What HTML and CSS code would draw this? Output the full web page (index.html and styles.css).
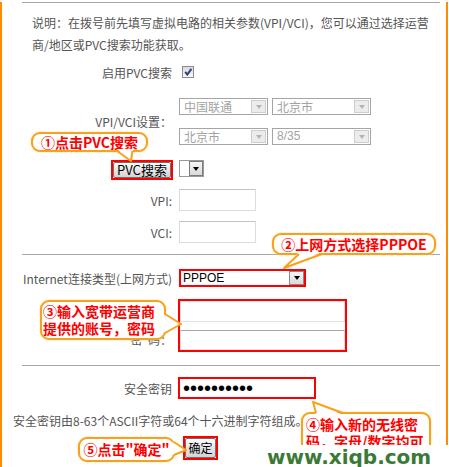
FILE: index.html
```html
<!DOCTYPE html>
<html lang="zh-CN">
<head>
    <meta charset="UTF-8">
    <meta name="viewport" content="width=device-width, initial-scale=1.0">
    <title>WAN口设置</title>
    <link rel="stylesheet" href="styles.css">
</head>
<body>
    <div class="page">
        <div class="frame">
            <div class="panel">
                <p class="intro">说明：在拨号前先填写虚拟电路的相关参数(<span class="lat">VPI/VCI</span>)，您可以通过选择运营<br>商/地区或<span class="lat">PVC</span>搜索功能获取。</p>

                <div class="row row-enable">
                    <span class="label">启用PVC搜索</span>
                    <span class="check">
                        <svg viewBox="0 0 10 10" width="10" height="10"><path d="M2.2 4.8 L4.3 7.6 L8.4 1.8"/></svg>
                    </span>
                </div>

                <div class="row row-vc">
                    <span class="label">VPI/VCI设置：</span>
                    <div class="select-grid">
                        <span class="select off"><span class="val">中国联通</span><span class="drop"></span></span>
                        <span class="select off"><span class="val">北京市</span><span class="drop"></span></span>
                        <span class="select off"><span class="val">北京市</span><span class="drop"></span></span>
                        <span class="select off"><span class="val num">8/35</span><span class="drop"></span></span>
                    </div>
                </div>

                <div class="row row-search">
                    <span class="hl hl-search"><button class="btn">PVC搜索</button></span>
                    <span class="select small"><span class="val"></span><span class="drop"></span></span>
                </div>

                <div class="row row-field">
                    <span class="label">VPI:</span>
                    <span class="input short"></span>
                </div>

                <div class="row row-field row-vci">
                    <span class="label">VCI:</span>
                    <span class="input short"></span>
                </div>

                <div class="sep"></div>

                <div class="row row-type">
                    <span class="label">Internet连接类型(上网方式)</span>
                    <span class="hl hl-type"><span class="select wide"><span class="val num">PPPOE</span><span class="drop"></span></span></span>
                </div>

                <div class="row row-account">
                    <div class="label-stack">
                        <span class="label">用户名：</span>
                        <span class="label">密&nbsp;&nbsp;码：</span>
                    </div>
                    <div class="hl hl-account">
                        <span class="input long"></span>
                        <span class="input long second"></span>
                    </div>
                </div>

                <div class="sep sep-key"></div>

                <div class="row row-key">
                    <span class="label">安全密钥</span>
                    <span class="hl hl-key"><span class="input pass">••••••••••</span></span>
                </div>
            </div>

            <p class="note">安全密钥由8-63个ASCII字符或64个十六进制字符组成。</p>

            <div class="row row-ok">
                <span></span>
                <span class="hl hl-ok"><button class="btn btn-ok">确定</button></span>
            </div>
        </div>

        <!-- 标注气泡 -->
        <div class="tip tip-1">①点击PVC搜索
            <svg class="tail" width="117" height="20"><polygon points="86,17 102,17 100,29"/><polyline points="86,19 100,29 101.5,19"/></svg>
        </div>
        <div class="tip tip-2">②上网方式选择PPPOE
            <svg class="tail" width="164" height="22"><polygon points="27,19 50,19 12,35"/><polyline points="27,21 12,35 50,21"/></svg>
        </div>
        <div class="tip tip-3">③输入宽带运营商<br>提供的账号，密码
            <svg class="tail" width="126" height="40"><polygon points="123,14 123,33 141,24"/><polyline points="125,14 141,24 125,33"/></svg>
        </div>
        <div class="tip tip-4">④输入新的无线密<br>码，字母/数字均可
            <svg class="tail" width="130" height="50"><polygon points="15,3 42,3 12,-10"/><polyline points="15,1 12,-10 42,1"/></svg>
        </div>
        <div class="tip tip-5">⑤点击"确定"
            <svg class="tail" width="97" height="25"><polygon points="94,5 94,18 108,13"/><polyline points="96,5 108,13 96,18"/></svg>
        </div>

        <div class="watermark">www.xiqb.com</div>
    </div>
</body>
</html>
```

FILE: styles.css
```css
/* Reset */
* {
    margin: 0;
    padding: 0;
    box-sizing: border-box;
}

body {
    width: 449px;
    height: 467px;
    overflow: hidden;
    background: #fff;
    font-family: "Noto Sans CJK SC", sans-serif;
    font-size: 12px;
    color: #555;
}

.page {
    position: relative;
    width: 449px;
    height: 467px;
}

/* 外框 */
.frame {
    width: 448px;
    height: 467px;
    border-left: 2px solid #ff8a00;
    border-right: 2px solid #ff8a00;
    border-bottom: 2px solid #ff8a00;
}

.panel {
    margin: 2px 0 0 20px;
    width: 418px;
    border-top: 1px solid #a8a8a8;
    padding-top: 9px;
}

.intro {
    padding-left: 10px;
    line-height: 22px;
    white-space: nowrap;
}

/* 表单行 */
.row {
    display: grid;
    grid-template-columns: 150px 1fr;
    column-gap: 7px;
    align-items: center;
}

.label {
    text-align: right;
    white-space: nowrap;
}

.row-enable {
    height: 20px;
    margin-top: 6px;
}

.check {
    width: 12px;
    height: 12px;
    margin-left: 3px;
    border: 1px solid #8c8c8c;
    background: linear-gradient(#d9d9d9, #fafafa);
    display: flex;
    align-items: center;
    justify-content: center;
}

.check path {
    fill: none;
    stroke: #2b3f8c;
    stroke-width: 2;
}

.row-vc {
    margin-top: 16px;
}

.select-grid {
    display: grid;
    grid-template-columns: 89px 99px;
    column-gap: 4px;
    row-gap: 13px;
}

/* 下拉框 */
.select {
    display: flex;
    height: 17px;
    border: 1px solid #a5a5a5;
    background: #fff;
    line-height: 15px;
}

.select .val {
    flex: 1;
    padding-left: 4px;
    color: #000;
    white-space: nowrap;
    overflow: hidden;
}

.select .num {
    font-family: "Liberation Sans", sans-serif;
}

.select .drop {
    width: 15px;
    margin: 1px;
    background: linear-gradient(#f6f6f6, #dadada);
    border: 1px solid #7c7c7c;
    display: flex;
    align-items: center;
    justify-content: center;
}

.select .drop::after {
    content: "";
    border-left: 3.5px solid transparent;
    border-right: 3.5px solid transparent;
    border-top: 4px solid #000;
}

.select.off .val {
    color: #a3a3a3;
}

.select.off .drop {
    background: #ececec;
    border-color: #cdcdcd;
}

.select.off .drop::after {
    border-top-color: #b3b3b3;
}

.select.small {
    width: 25px;
    height: 17px;
    border-color: #9a9a9a;
    align-self: start;
}

.select.small .val {
    padding: 0;
}

.select.small .drop {
    width: 14px;
    margin: 0;
}

.select.wide {
    width: 123px;
    height: 14px;
    border: none;
    line-height: 14px;
}

.select.wide .val {
    padding-left: 2px;
    font-size: 12px;
}

.select.wide .drop {
    margin: 0;
    width: 15px;
    border-color: #8a8a8a;
}

/* 红色标注框 */
.hl {
    border: 2px solid #f00;
    display: flex;
}

.row-search {
    height: 20px;
    margin-top: 15px;
}

.hl-search {
    justify-self: end;
    width: 62px;
    height: 20px;
    margin-right: -1px;
}

.btn {
    flex: 1;
    background: linear-gradient(#fdfdfd, #e6e6e6 50%, #d4d4d4);
    border: 1px solid #707070;
    border-radius: 2px;
    font-family: "Noto Sans CJK SC", sans-serif;
    font-size: 13px;
    line-height: 14px;
    color: #000;
}

/* 输入框 */
.input {
    display: block;
    background: #fff;
    border: 1px solid #dcdcdc;
    border-top-color: #c4c4c4;
}

.input.short {
    width: 77px;
    height: 22px;
}

.row-field {
    height: 22px;
    margin-top: 9px;
}

.row-vci {
    margin-top: 10px;
}

.sep {
    margin-top: 11px;
    border-top: 1px solid #a8a8a8;
}

.row-type {
    height: 18px;
    margin-top: 14px;
}

.hl-type {
    width: 127px;
    height: 18px;
}

.row-account {
    height: 53px;
    margin-top: 12px;
    align-items: start;
}

.label-stack {
    display: flex;
    flex-direction: column;
    gap: 8px;
    padding-top: 2px;
}

.label-stack .label:first-child {
    line-height: 21px;
}

.label-stack .label:last-child {
    line-height: 20px;
}

.hl-account {
    width: 169px;
    height: 53px;
    margin-left: -1px;
    flex-direction: column;
}

.input.long {
    height: 21px;
    margin-bottom: 8px;
    border-color: #e2e2e2;
}

.input.long.second {
    height: 20px;
    margin-bottom: 0;
    border-top-color: #a8a8a8;
}

.sep-key {
    margin-top: 13px;
}

.row-key {
    height: 22px;
    margin-top: 11px;
}

.hl-key {
    width: 138px;
    height: 22px;
    margin-left: -1px;
}

.input.pass {
    flex: 1;
    border: none;
    padding-left: 3px;
    font-family: "Liberation Sans", sans-serif;
    font-size: 20px;
    line-height: 18px;
    color: #000;
}

.note {
    margin-top: 12px;
    padding-left: 11px;
    line-height: 20px;
    white-space: nowrap;
}

.row-ok {
    height: 24px;
    margin: 5px 0 0 20px;
}

.hl-ok {
    width: 35px;
    height: 24px;
    margin-left: 4px;
}

.btn-ok {
    font-size: 12px;
}

/* 气泡 */
.tip {
    position: absolute;
    border: 2px solid #f8a11c;
    border-radius: 9px;
    background: #fff;
    box-shadow: 0 0 2px #fcd38f;
    color: #f00;
    font-weight: 700;
    font-size: 14px;
    white-space: nowrap;
}

.tail {
    position: absolute;
    left: -2px;
    top: -2px;
    overflow: visible;
}

.tail polygon {
    fill: #fff;
}

.tail polyline {
    fill: none;
    stroke: #f8a11c;
    stroke-width: 2;
    stroke-linejoin: round;
}

.tip-1 {
    left: 31px;
    top: 130px;
    width: 117px;
    height: 20px;
    line-height: 16px;
    text-align: center;
}

.tip-2 {
    left: 272px;
    top: 231px;
    width: 164px;
    height: 22px;
    line-height: 18px;
    text-align: center;
}

.tip-3 {
    left: 40px;
    top: 298px;
    width: 126px;
    height: 40px;
    padding: 1px 0 0 1px;
    line-height: 17px;
}

.tip-4 {
    left: 301px;
    top: 410px;
    width: 130px;
    height: 50px;
    padding: 2px 0 0 3px;
    line-height: 17px;
}

.tip-5 {
    left: 78px;
    top: 435px;
    width: 97px;
    height: 25px;
    line-height: 21px;
    text-align: center;
}

/* 水印 */
.watermark {
    position: absolute;
    left: 262px;
    top: 443px;
    width: 187px;
    height: 24px;
    padding-left: 5px;
    background: #fff;
    color: #3a7a36;
    font-family: "DejaVu Sans", sans-serif;
    font-weight: 700;
    font-size: 20px;
    line-height: 24px;
    white-space: nowrap;
}
```
